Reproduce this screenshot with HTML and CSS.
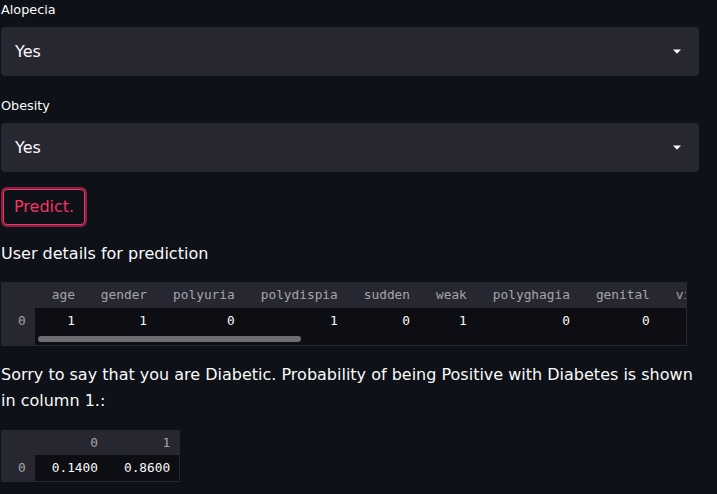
FILE: index.html
```html
<!DOCTYPE html>
<html lang="en">
<head>
<meta charset="utf-8">
<title>Diabetes prediction</title>
<link rel="stylesheet" href="styles.css">
</head>
<body>
<main class="page">
  <div class="field">
    <div class="label">Alopecia</div>
    <div class="select">
      <span class="value">Yes</span>
      <svg class="caret" width="8" height="5" viewBox="0 0 8 5"><path d="M0 0.5H8L4 4.8Z" fill="#fafafa"/></svg>
    </div>
  </div>
  <div class="field">
    <div class="label">Obesity</div>
    <div class="select">
      <span class="value">Yes</span>
      <svg class="caret" width="8" height="5" viewBox="0 0 8 5"><path d="M0 0.5H8L4 4.8Z" fill="#fafafa"/></svg>
    </div>
  </div>
  <div class="btn-row"><button class="btn" type="button">Predict.</button></div>
  <p class="text">User details for prediction</p>
  <div class="df">
    <div class="df-clip">
      <table class="grid">
        <thead>
          <tr><th class="idx"></th><th>age</th><th>gender</th><th>polyuria</th><th>polydispia</th><th>sudden</th><th>weak</th><th>polyghagia</th><th>genital</th><th>visual</th><th>itching</th><th>irritability</th></tr>
        </thead>
        <tbody>
          <tr><th class="idx">0</th><td>1</td><td>1</td><td>0</td><td>1</td><td>0</td><td>1</td><td>0</td><td>0</td><td>0</td><td>0</td><td>0</td></tr>
          <tr class="track"><th class="idx"></th><td colspan="11"><div class="thumb"></div></td></tr>
        </tbody>
      </table>
    </div>
  </div>
  <p class="text">Sorry to say that you are Diabetic. Probability of being Positive with Diabetes is shown in column 1.:</p>
  <div class="df df-small">
    <div class="df-clip">
      <table class="grid">
        <thead>
          <tr><th class="idx"></th><th>0</th><th>1</th></tr>
        </thead>
        <tbody>
          <tr><th class="idx">0</th><td>0.1400</td><td>0.8600</td></tr>
        </tbody>
      </table>
    </div>
  </div>
</main>
</body>
</html>
```

FILE: styles.css
```css
html, body {
  margin: 0;
  padding: 0;
  background: #0e1117;
}

body {
  font-family: "DejaVu Sans", sans-serif;
  color: #fafafa;
}

.page {
  width: 698px;
  padding-left: 1px;
}

.field {
  margin-bottom: 20px;
}

.label {
  font-size: 12.8px;
  line-height: 19px;
  margin-bottom: 8px;
  color: #fafafa;
}

.select {
  box-sizing: border-box;
  height: 49px;
  background: #262730;
  border-radius: 4px;
  display: flex;
  align-items: center;
  justify-content: space-between;
  padding: 0 18px 0 14px;
}

.value {
  font-size: 16px;
  line-height: 20px;
}

.caret {
  display: block;
}

.btn-row {
  margin-top: -3px;
  padding-left: 2px;
}

.btn {
  font-family: "DejaVu Sans", sans-serif;
  font-size: 16px;
  line-height: 25.6px;
  color: #f63366;
  background: #0e1117;
  border: 1px solid #f63366;
  border-radius: 4px;
  padding: 4px 10px;
  margin: 0;
  box-shadow: 0 0 0 2px rgba(246, 51, 102, 0.5);
}

.text {
  font-size: 16px;
  line-height: 25.6px;
  margin: 16px 0 16px;
}

.df {
  background: #262730;
  padding: 0 1px 1px 0;
  width: 685px;
}

.df-small {
  width: fit-content;
}

.df-clip {
  overflow: hidden;
}

.grid {
  border-collapse: collapse;
  border-spacing: 0;
  font-family: "DejaVu Sans Mono", monospace;
  font-size: 12.8px;
  line-height: 25.6px;
}

.grid th,
.grid td {
  padding: 0 9px 0 17px;
  text-align: right;
  white-space: nowrap;
  font-weight: normal;
}

.grid thead th,
.grid .idx {
  color: rgba(250, 250, 250, 0.6);
  background: #262730;
}

.grid td {
  color: #fafafa;
  background: #0c0e13;
}

.grid .track td {
  padding: 0;
  height: 12px;
  line-height: 0;
  text-align: left;
  vertical-align: top;
}

.grid .track th {
  line-height: 0;
  height: 12px;
}

.thumb {
  width: 263px;
  height: 6px;
  margin: 3px 0 0 3px;
  border-radius: 3px;
  background: #6d6e73;
}
```
